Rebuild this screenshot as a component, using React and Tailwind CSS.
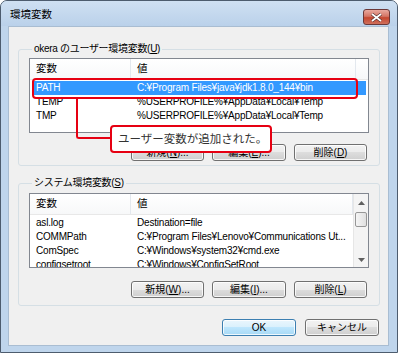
import React from "react";

const F = { fontFamily: '"Liberation Sans", "Noto Sans CJK JP", sans-serif' };

function Btn({ children, w = "w-[74px]", primary = false }) {
  return (
    <div
      className={`${w} h-[17px] flex items-center justify-center rounded-[3px] border text-[10px] leading-none text-black ${
        primary
          ? "border-[#3c7fb1] bg-[linear-gradient(#eaf6fd_0%,#d9f0fc_50%,#bee6fd_50%,#a7d9f5_100%)]"
          : "border-[#707070] bg-[linear-gradient(#f2f2f2_0%,#ebebeb_50%,#dddddd_50%,#cfcfcf_100%)]"
      } shadow-[inset_0_0_0_1px_rgba(255,255,255,0.8)]`}
    >
      {children}
    </div>
  );
}

function U({ children }) {
  return <span className="underline underline-offset-1">{children}</span>;
}

function ListBox({ rows, scroll = false, highlightFirst = false }) {
  return (
    <div className="w-[340px] h-[75px] border border-[#828790] bg-white flex overflow-hidden">
      <div className="flex-1 flex flex-col min-w-0">
        <div className="h-[21px] shrink-0 flex items-stretch border-b border-[#e8e8e8] text-[10.5px] text-black bg-[linear-gradient(#ffffff,#f7f8f9)]">
          <div className="w-[101px] pl-[6px] flex items-center border-r border-[#e3e8ee]">変数</div>
          <div className="flex-1 pl-[6px] flex items-center border-r border-[#e3e8ee]">値</div>
          {!scroll && <div className="w-[12px]" />}
        </div>
        {rows.map((r, i) => (
          <div
            key={i}
            className={`h-[14px] shrink-0 flex items-center text-[10px] leading-[14px] tracking-[-0.2px] whitespace-nowrap mx-[2px] ${
              i === 0 ? "mt-[1px]" : ""
            } ${highlightFirst && i === 0 ? "bg-[#3399ff] text-white" : "text-black"}`}
          >
            <div className="w-[99px] pl-[4px]">{r[0]}</div>
            <div className="flex-1 pl-[6px]">{r[1]}</div>
          </div>
        ))}
      </div>
      {scroll && (
        <div className="w-[15px] shrink-0 flex flex-col bg-[#f4f4f4] border-l border-[#e6e6e6]">
          <div className="h-[18px] flex items-center justify-center">
            <svg width="7" height="4" viewBox="0 0 7 4"><path d="M0 4 L3.5 0 L7 4Z" fill="#606060" /></svg>
          </div>
          <div className="h-[15px] mx-[1px] rounded-[2px] border border-[#979797] bg-[linear-gradient(90deg,#f5f5f5,#e0e0e0)]" />
          <div className="flex-1" />
          <div className="h-[15px] flex items-center justify-center">
            <svg width="7" height="4" viewBox="0 0 7 4"><path d="M0 0 L3.5 4 L7 0Z" fill="#606060" /></svg>
          </div>
        </div>
      )}
    </div>
  );
}

export default function App() {
  return (
    <div className="w-[398px] h-[353px] bg-white" style={F}>
      <div className="w-[398px] h-[353px] flex flex-col rounded-t-[7px] border border-[#4d5c6e] bg-[#bfd5ec]">
        <div className="h-[25px] flex items-start justify-between bg-[linear-gradient(#cfe0f2,#bad1ea)] rounded-t-[6px]">
          <div className="pl-[9px] pt-[6px] text-[10.5px] text-black leading-[14px]">環境変数</div>
          <div className="mt-[8px] mr-[7px] w-[27px] h-[16px] rounded-[3px] border border-[#6b3838] bg-[linear-gradient(#e9a99f,#d47565_45%,#c4462f_55%,#d0705c)] flex items-center justify-center">
            <svg width="11" height="9" viewBox="0 0 11 9">
              <path d="M1 1 L10 8 M10 1 L1 8" stroke="#4a2a2a" strokeWidth="3" />
              <path d="M1 1 L10 8 M10 1 L1 8" stroke="#ffffff" strokeWidth="1.8" />
            </svg>
          </div>
        </div>
        <div className="flex-1 ml-[7px] mr-[8px] mb-[6px] bg-[#f0f0f0] border border-[#a9bdd2] relative flex flex-col px-[9px]">
          <fieldset className="mt-[15px] border border-[#d5dfe5] rounded-[3px] pl-[10px] pr-[10px] pt-[2px] pb-[4px]">
            <legend className="ml-[3px] px-[2px] text-[10px] tracking-[-0.3px] leading-[14px] text-black">
              okera のユーザー環境変数(<U>U</U>)
            </legend>
            <ListBox
              highlightFirst
              rows={[
                ["PATH", "C:¥Program Files¥java¥jdk1.8.0_144¥bin"],
                ["TEMP", "%USERPROFILE%¥AppData¥Local¥Temp"],
                ["TMP", "%USERPROFILE%¥AppData¥Local¥Temp"],
              ]}
            />
            <div className="mt-[11px] flex justify-end gap-[8px] pr-[2px]">
              <Btn w="w-[73px]">新規(<U>N</U>)...</Btn>
              <Btn>編集(<U>E</U>)...</Btn>
              <Btn w="w-[73px]">削除(<U>D</U>)</Btn>
            </div>
          </fieldset>
          <fieldset className="mt-[10px] border border-[#d5dfe5] rounded-[3px] pl-[10px] pr-[10px] pt-[3px] pb-[7px]">
            <legend className="ml-[3px] px-[2px] text-[10px] tracking-[-0.3px] leading-[14px] text-black">
              システム環境変数(<U>S</U>)
            </legend>
            <ListBox
              scroll
              rows={[
                ["asl.log", "Destination=file"],
                ["COMMPath", "C:¥Program Files¥Lenovo¥Communications Ut..."],
                ["ComSpec", "C:¥Windows¥system32¥cmd.exe"],
                ["configsetroot", "C:¥Windows¥ConfigSetRoot"],
              ]}
            />
            <div className="mt-[13px] flex justify-end gap-[8px] pr-[2px]">
              <Btn w="w-[73px]">新規(<U>W</U>)...</Btn>
              <Btn>編集(<U>I</U>)...</Btn>
              <Btn w="w-[73px]">削除(<U>L</U>)</Btn>
            </div>
          </fieldset>
          <div className="mt-[13px] flex justify-end gap-[9px]">
            <Btn primary>OK</Btn>
            <Btn>キャンセル</Btn>
          </div>

          {/* callout overlay */}
          <div className="absolute left-[23px] top-[51px] w-[326px] h-[21px] border-2 border-[#e60012] rounded-[4px]" />
          <div className="absolute left-[67px] top-[72px] w-[36px] h-[40px] border-l-2 border-b-2 border-[#e60012] rounded-bl-[3px]" />
          <div className="absolute left-[101px] top-[98px] w-[162px] h-[28px] border-2 border-[#e60012] rounded-[4px] bg-white flex items-center pl-[6px] text-[11.5px] text-[#333] whitespace-nowrap" style={{ fontFamily: '"Noto Sans CJK JP", sans-serif' }}>
            ユーザー変数が追加された。
          </div>
        </div>
      </div>
    </div>
  );
}
